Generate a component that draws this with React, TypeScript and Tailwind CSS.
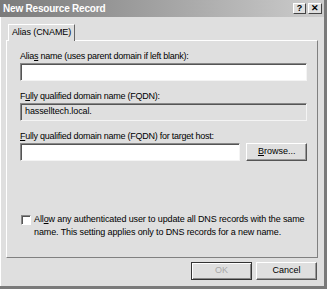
import React from "react";

const font = { fontFamily: '"Liberation Sans", Arial, sans-serif' };

function Sunken({ children, className = "" }: { children?: React.ReactNode; className?: string }) {
	return (
		<div
			className={`h-[18px] border border-t-[#888] border-l-[#888] border-b-[#f4f4f4] border-r-[#f4f4f4] shadow-[inset_1px_1px_0_#555] flex items-center pl-[4px] text-[9px] tracking-[-0.1px] text-black ${className}`}
		>
			{children}
		</div>
	);
}

function Btn({ children, def = false, disabled = false }: { children: React.ReactNode; def?: boolean; disabled?: boolean }) {
	return (
		<button
			className={`h-[18px] flex items-center justify-center text-[9px] bg-[#dfdfdf] border ${
				def
					? "border-[#333] shadow-[inset_1px_1px_0_#fff,inset_-1px_-1px_0_#888]"
					: "border-t-white border-l-white border-b-[#555] border-r-[#555] shadow-[inset_-1px_-1px_0_#999]"
			} ${disabled ? "text-[#a8a8a8]" : "text-black"}`}
		>
			{children}
		</button>
	);
}

export default function App() {
	return (
		<div
			style={font}
			className="w-[327px] h-[289px] bg-[#dfdfdf] border-r-[3px] border-b-[3px] border-[#7a7a7a] flex flex-col overflow-hidden"
		>
			{/* title bar */}
			<div className="h-[17px] bg-gradient-to-r from-[#7b7b7b] to-[#cdcdcd] flex items-center justify-between pl-[3px] pr-[2px] shrink-0">
				<span className="text-white font-bold text-[10px] tracking-[-0.2px]">New Resource Record</span>
				<div className="flex gap-[2px]">
					<div className="w-[13px] h-[11px] bg-[#dfdfdf] border border-t-white border-l-white border-b-[#444] border-r-[#444] flex items-center justify-center text-[9px] font-bold leading-none text-black">
						?
					</div>
					<div className="w-[14px] h-[11px] bg-[#dfdfdf] border border-t-white border-l-white border-b-[#444] border-r-[#444] flex items-center justify-center text-[9px] font-bold leading-none text-black">
						✕
					</div>
				</div>
			</div>

			<div className="flex-1 pl-[5px] pr-[6px] pt-[6px] border-l border-white flex flex-col">
				{/* tab */}
				<div className="ml-[2px] w-[67px] h-[17px] border-t border-l border-white border-r border-r-[#666] flex items-center justify-center whitespace-nowrap text-[9px] tracking-[-0.1px] text-black relative top-[1px] bg-[#dfdfdf] z-10">
					Alias (CNAME)
				</div>
				{/* tab panel */}
				<div className="h-[218px] border border-t-white border-l-white border-b-[#808080] border-r-[#808080] pl-[13px] pr-[10px] text-[9px] text-black">
					<div className="mt-[9px] h-[13px] leading-[13px] tracking-[-0.25px]">
						Alia<u>s</u> name (uses parent domain if left blank):
					</div>
					<Sunken className="bg-white" />
					<div className="mt-[9px] h-[13px] leading-[13px] tracking-[-0.25px]">
						F<u>u</u>lly qualified domain name (FQDN):
					</div>
					<Sunken className="bg-[#dfdfdf]">hasselltech.local.</Sunken>
					<div className="mt-[9px] h-[13px] leading-[13px] tracking-[-0.25px]">
						<u>F</u>ully qualified domain name (FQDN) for target host:
					</div>
					<div className="flex gap-[6px]">
						<Sunken className="bg-white w-[222px]" />
						<div className="w-[61px] flex flex-col">
							<Btn>
								<u>B</u>rowse...
							</Btn>
						</div>
					</div>
					<div className="mt-[52px] flex gap-[3px]">
						<div className="w-[10px] h-[10px] mt-[2px] ml-[1px] bg-white border border-t-[#888] border-l-[#888] border-b-white border-r-white shadow-[inset_1px_1px_0_#555] shrink-0" />
						<div className="leading-[13px] text-[9px] tracking-[-0.12px] whitespace-nowrap">
							All<u>o</u>w any authenticated user to update all DNS records with the same
							<br />
							name. This setting applies only to DNS records for a new name.
						</div>
					</div>
				</div>
				{/* buttons */}
				<div className="mt-[4px] flex justify-end gap-[4px] pr-[1px]">
					<div className="w-[61px] flex flex-col">
						<Btn def disabled>
							OK
						</Btn>
					</div>
					<div className="w-[61px] flex flex-col">
						<Btn>Cancel</Btn>
					</div>
				</div>
			</div>
		</div>
	);
}
